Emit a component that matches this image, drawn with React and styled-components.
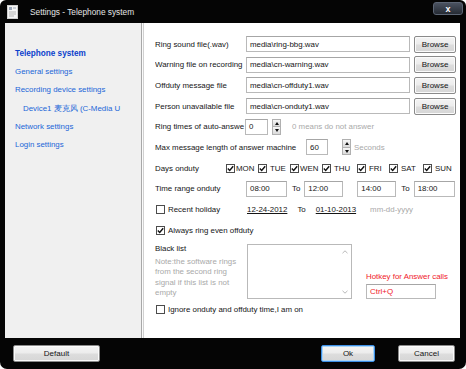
import React from 'react';
import styled, { createGlobalStyle } from 'styled-components';

const Global = createGlobalStyle`
  html, body { margin: 0; padding: 0; background: #ffffff; }
  #root { width: 466px; height: 369px; }
`;

const Window = styled.div`
  width: 466px;
  height: 369px;
  background: #050505;
  border-radius: 6px 6px 7px 7px;
  display: flex;
  flex-direction: column;
  overflow: hidden;
  font-family: "Liberation Sans", Arial, sans-serif;
  font-size: 7.9px;
  color: #151515;
`;

const TitleBar = styled.div`
  height: 23px;
  flex-shrink: 0;
  display: flex;
  align-items: center;
  padding: 0 3px 0 7px;
`;

const TitleText = styled.span`
  color: #e6e6e6;
  font-size: 8.3px;
  margin-left: 12px;
`;

const CloseBtn = styled.div`
  margin-left: auto;
  align-self: flex-start;
  margin-top: 2px;
  width: 30px;
  height: 13px;
  box-sizing: border-box;
  border-radius: 3px;
  border: 1px solid #5c6574;
  background: linear-gradient(#4a5260, #262b34);
  color: #ffffff;
  font-weight: bold;
  font-size: 9px;
  display: flex;
  align-items: center;
  justify-content: center;
`;

const Body = styled.div`
  display: flex;
  height: 315px;
  flex-shrink: 0;
  margin: 0 6px 0 5px;
`;

const Sidebar = styled.nav`
  width: 136px;
  flex-shrink: 0;
  background: #f0f0f0;
  box-sizing: border-box;
  padding-top: 21.5px;
  display: flex;
  flex-direction: column;
`;

const NavItem = styled.div`
  height: 18.4px;
  line-height: 18.4px;
  padding-left: ${p => (p.$indent ? 18 : 10)}px;
  color: ${p => (p.$active ? '#0b3fcc' : '#2266d8')};
  font-weight: ${p => (p.$active ? 'bold' : 'normal')};
  font-size: ${p => (p.$active ? 8.2 : 7.9)}px;
  white-space: nowrap;
  overflow: hidden;
`;

const Divider = styled.div`
  width: 3px;
  flex-shrink: 0;
  box-sizing: border-box;
  border-left: 1px solid #a8a8a8;
  border-right: 1px solid #d0d0d0;
  background: #fafafa;
`;

const Main = styled.div`
  flex: 1;
  background: #ffffff;
  box-sizing: border-box;
  padding: 10.7px 0 0 11px;
  display: flex;
  flex-direction: column;
`;

const Row = styled.div`
  height: ${p => p.$h || 20.7}px;
  flex-shrink: 0;
  display: flex;
  align-items: center;
`;

const Label = styled.div`
  width: ${p => p.$w}px;
  flex-shrink: 0;
  white-space: nowrap;
  overflow: hidden;
`;

const TextBox = styled.div`
  width: ${p => p.$w}px;
  height: ${p => p.$h || 16}px;
  margin-left: ${p => p.$ml || 0}px;
  flex-shrink: 0;
  box-sizing: border-box;
  border: 1px solid #b9b9b9;
  border-top-color: #a6a6a6;
  background: #ffffff;
  padding-left: 3px;
  display: flex;
  align-items: center;
  white-space: nowrap;
  overflow: hidden;
  color: ${p => p.$color || '#151515'};
`;

const Button = styled.button`
  width: ${p => p.$w}px;
  height: 17px;
  margin-left: ${p => p.$ml || 0}px;
  flex-shrink: 0;
  box-sizing: border-box;
  padding: 0;
  border: 1px solid ${p => (p.$focus ? '#3c8fe6' : '#8a8a8a')};
  border-radius: 2px;
  background: linear-gradient(#f4f4f4 0%, #ececec 48%, #dddddd 52%, #d6d6d6 100%);
  box-shadow: ${p => (p.$focus ? 'inset 0 0 0 1px #a9d4f6' : 'inset 0 0 0 1px #fbfbfb')};
  font-family: "Liberation Sans", Arial, sans-serif;
  font-size: 8px;
  color: #151515;
`;

const Hint = styled.span`
  color: #a9a9a9;
  margin-left: ${p => p.$ml || 0}px;
  white-space: nowrap;
`;

const Plain = styled.span`
  margin-left: ${p => p.$ml || 0}px;
  white-space: nowrap;
  text-decoration: ${p => (p.$u ? 'underline' : 'none')};
`;

const Spin = styled.div`
  width: 9px;
  height: 16px;
  margin-left: ${p => p.$ml || 4}px;
  flex-shrink: 0;
  box-sizing: border-box;
  border: 1px solid #b0b0b0;
  display: flex;
  flex-direction: column;
`;

const SpinHalf = styled.div`
  flex: 1;
  background: linear-gradient(#f6f6f6, #dadada);
  display: flex;
  align-items: center;
  justify-content: center;
  & + & { border-top: 1px solid #b0b0b0; }
`;

const Tri = styled.span`
  width: 0;
  height: 0;
  border-left: 2.5px solid transparent;
  border-right: 2.5px solid transparent;
  ${p => (p.$down ? 'border-top: 3px solid #111;' : 'border-bottom: 3px solid #111;')}
`;

const CheckWrap = styled.label`
  display: flex;
  align-items: center;
  white-space: nowrap;
  margin-left: ${p => p.$ml || 0}px;
  width: ${p => (p.$w ? `${p.$w}px` : 'auto')};
  flex-shrink: 0;
`;

const Box = styled.span`
  width: 9px;
  height: 9px;
  box-sizing: border-box;
  border: 1px solid #4c4c4c;
  background: #ffffff;
  display: inline-flex;
  align-items: center;
  justify-content: center;
  margin-right: ${p => p.$gap ?? 3}px;
  flex-shrink: 0;
`;

const Check = ({ checked, gap }) => (
  <Box $gap={gap}>
    {checked && (
      <svg width="7" height="7" viewBox="0 0 7 7">
        <path d="M0.8 3.6 L2.7 5.5 L6.2 1.2" fill="none" stroke="#111" strokeWidth="1.4" />
      </svg>
    )}
  </Box>
);

const BlackArea = styled.div`
  display: flex;
  align-items: flex-start;
  margin-top: 3.5px;
  height: 55px;
  flex-shrink: 0;
`;

const NoteCol = styled.div`
  width: 92px;
  flex-shrink: 0;
  display: flex;
  flex-direction: column;
`;

const NoteTitle = styled.div`
  height: 13px;
  line-height: 10px;
`;

const NoteText = styled.div`
  color: #a9a9a9;
  line-height: 10.3px;
  width: 86px;
`;

const ListBox = styled.div`
  width: 105px;
  height: 55px;
  flex-shrink: 0;
  box-sizing: border-box;
  border: 1px solid #b9b9b9;
  background: #ffffff;
  display: flex;
  justify-content: flex-end;
`;

const ScrollTrack = styled.div`
  width: 12px;
  display: flex;
  flex-direction: column;
  justify-content: space-between;
  align-items: center;
  padding: 5px 0 4px;
`;

const HotkeyCol = styled.div`
  margin-left: 14px;
  align-self: stretch;
  display: flex;
  flex-direction: column;
  justify-content: flex-end;
`;

const HotkeyLabel = styled.div`
  color: #f0202a;
  margin-bottom: 3px;
  white-space: nowrap;
`;

const Footer = styled.div`
  flex: 1;
  display: flex;
  align-items: flex-start;
  padding: 7px 11px 0 13px;
`;

const AppIcon = () => (
  <svg width="11" height="14" viewBox="0 0 11 14">
    <rect x="0.5" y="0.5" width="10" height="13" fill="#f4f4f4" stroke="#cfcfcf" />
    <rect x="2" y="2" width="3" height="3" fill="#9aa6b8" />
    <rect x="6" y="2.5" width="3" height="1" fill="#9aa6b8" />
    <rect x="2" y="6.5" width="7" height="1" fill="#b4b4b4" />
    <rect x="2" y="8.5" width="7" height="1" fill="#b4b4b4" />
    <rect x="2" y="10.5" width="5" height="1" fill="#b4b4b4" />
  </svg>
);

const Chevron = ({ down }) => (
  <svg width="6" height="4" viewBox="0 0 6 4">
    <path d={down ? 'M0.5 0.8 L3 3.2 L5.5 0.8' : 'M0.5 3.2 L3 0.8 L5.5 3.2'} fill="none" stroke="#b8b8b8" strokeWidth="1" />
  </svg>
);

const Spinner = ({ ml }) => (
  <Spin $ml={ml}>
    <SpinHalf><Tri /></SpinHalf>
    <SpinHalf><Tri $down /></SpinHalf>
  </Spin>
);

const files = [
  ['Ring sound file(.wav)', 'media\\ring-bbg.wav'],
  ['Warning file on recording', 'media\\cn-warning.wav'],
  ['Offduty message file', 'media\\cn-offduty1.wav'],
  ['Person unavailable file', 'media\\cn-onduty1.wav'],
];

// [label, slot width, gap between box and text]
const days = [
  ['MON', 32, 1],
  ['TUE', 32, 3],
  ['WEN', 32, 1],
  ['THU', 35, 3],
  ['FRI', 32, 3],
  ['SAT', 34, 3],
  ['SUN', 31, 3],
];

export default function App() {
  return (
    <>
      <Global />
      <Window>
        <TitleBar>
          <AppIcon />
          <TitleText>Settings - Telephone system</TitleText>
          <CloseBtn>x</CloseBtn>
        </TitleBar>
        <Body>
          <Sidebar>
            <NavItem $active>Telephone system</NavItem>
            <NavItem>General settings</NavItem>
            <NavItem>Recording device settings</NavItem>
            <NavItem $indent>Device1 麦克风 (C-Media U</NavItem>
            <NavItem>Network settings</NavItem>
            <NavItem>Login settings</NavItem>
          </Sidebar>
          <Divider />
          <Main>
            {files.map(([label, value]) => (
              <Row key={label}>
                <Label $w={91}>{label}</Label>
                <TextBox $w={164}>{value}</TextBox>
                <Button $w={42} $ml={4}>Browse</Button>
              </Row>
            ))}
            <Row>
              <Label $w={90}>Ring times of auto-answe</Label>
              <TextBox $w={23}>0</TextBox>
              <Spinner ml={4} />
              <Hint $ml={11}>0 means do not answer</Hint>
            </Row>
            <Row>
              <Label $w={151}>Max message length of answer machine</Label>
              <TextBox $w={22}>60</TextBox>
              <Spinner ml={14} />
              <Hint $ml={3}>Seconds</Hint>
            </Row>
            <Row>
              <Label $w={71}>Days onduty</Label>
              {days.map(([d, w, gap]) => (
                <CheckWrap key={d} $w={w}>
                  <Check checked gap={gap} />
                  {d}
                </CheckWrap>
              ))}
            </Row>
            <Row>
              <Label $w={91}>Time range onduty</Label>
              <TextBox $w={41}>08:00</TextBox>
              <Plain $ml={5}>To</Plain>
              <TextBox $w={39} $ml={4}>12:00</TextBox>
              <TextBox $w={39} $ml={14}>14:00</TextBox>
              <Plain $ml={5}>To</Plain>
              <TextBox $w={41} $ml={4}>18:00</TextBox>
            </Row>
            <Row>
              <CheckWrap $ml={1} $w={91}>
                <Check gap={3} />
                Recent holiday
              </CheckWrap>
              <Plain $u>12-24-2012</Plain>
              <Plain $ml={10}>To</Plain>
              <Plain $ml={10} $u>01-10-2013</Plain>
              <Hint $ml={14}>mm-dd-yyyy</Hint>
            </Row>
            <Row>
              <CheckWrap $ml={1}>
                <Check checked gap={3} />
                Always ring even offduty
              </CheckWrap>
            </Row>
            <BlackArea>
              <NoteCol>
                <NoteTitle>Black list</NoteTitle>
                <NoteText>Note:the software rings from the second ring signal if this list is not empty</NoteText>
              </NoteCol>
              <ListBox>
                <ScrollTrack>
                  <Chevron />
                  <Chevron down />
                </ScrollTrack>
              </ListBox>
              <HotkeyCol>
                <HotkeyLabel>Hotkey for Answer calls</HotkeyLabel>
                <TextBox $w={70} $h={15} $color="#f0202a">Ctrl+Q</TextBox>
              </HotkeyCol>
            </BlackArea>
            <Row $h={20}>
              <CheckWrap $ml={1}>
                <Check gap={3} />
                Ignore onduty and offduty time,I am on
              </CheckWrap>
            </Row>
          </Main>
        </Body>
        <Footer>
          <Button $w={87}>Default</Button>
          <Button $w={54} $ml={221} $focus>Ok</Button>
          <Button $w={57} $ml={23}>Cancel</Button>
        </Footer>
      </Window>
    </>
  );
}
